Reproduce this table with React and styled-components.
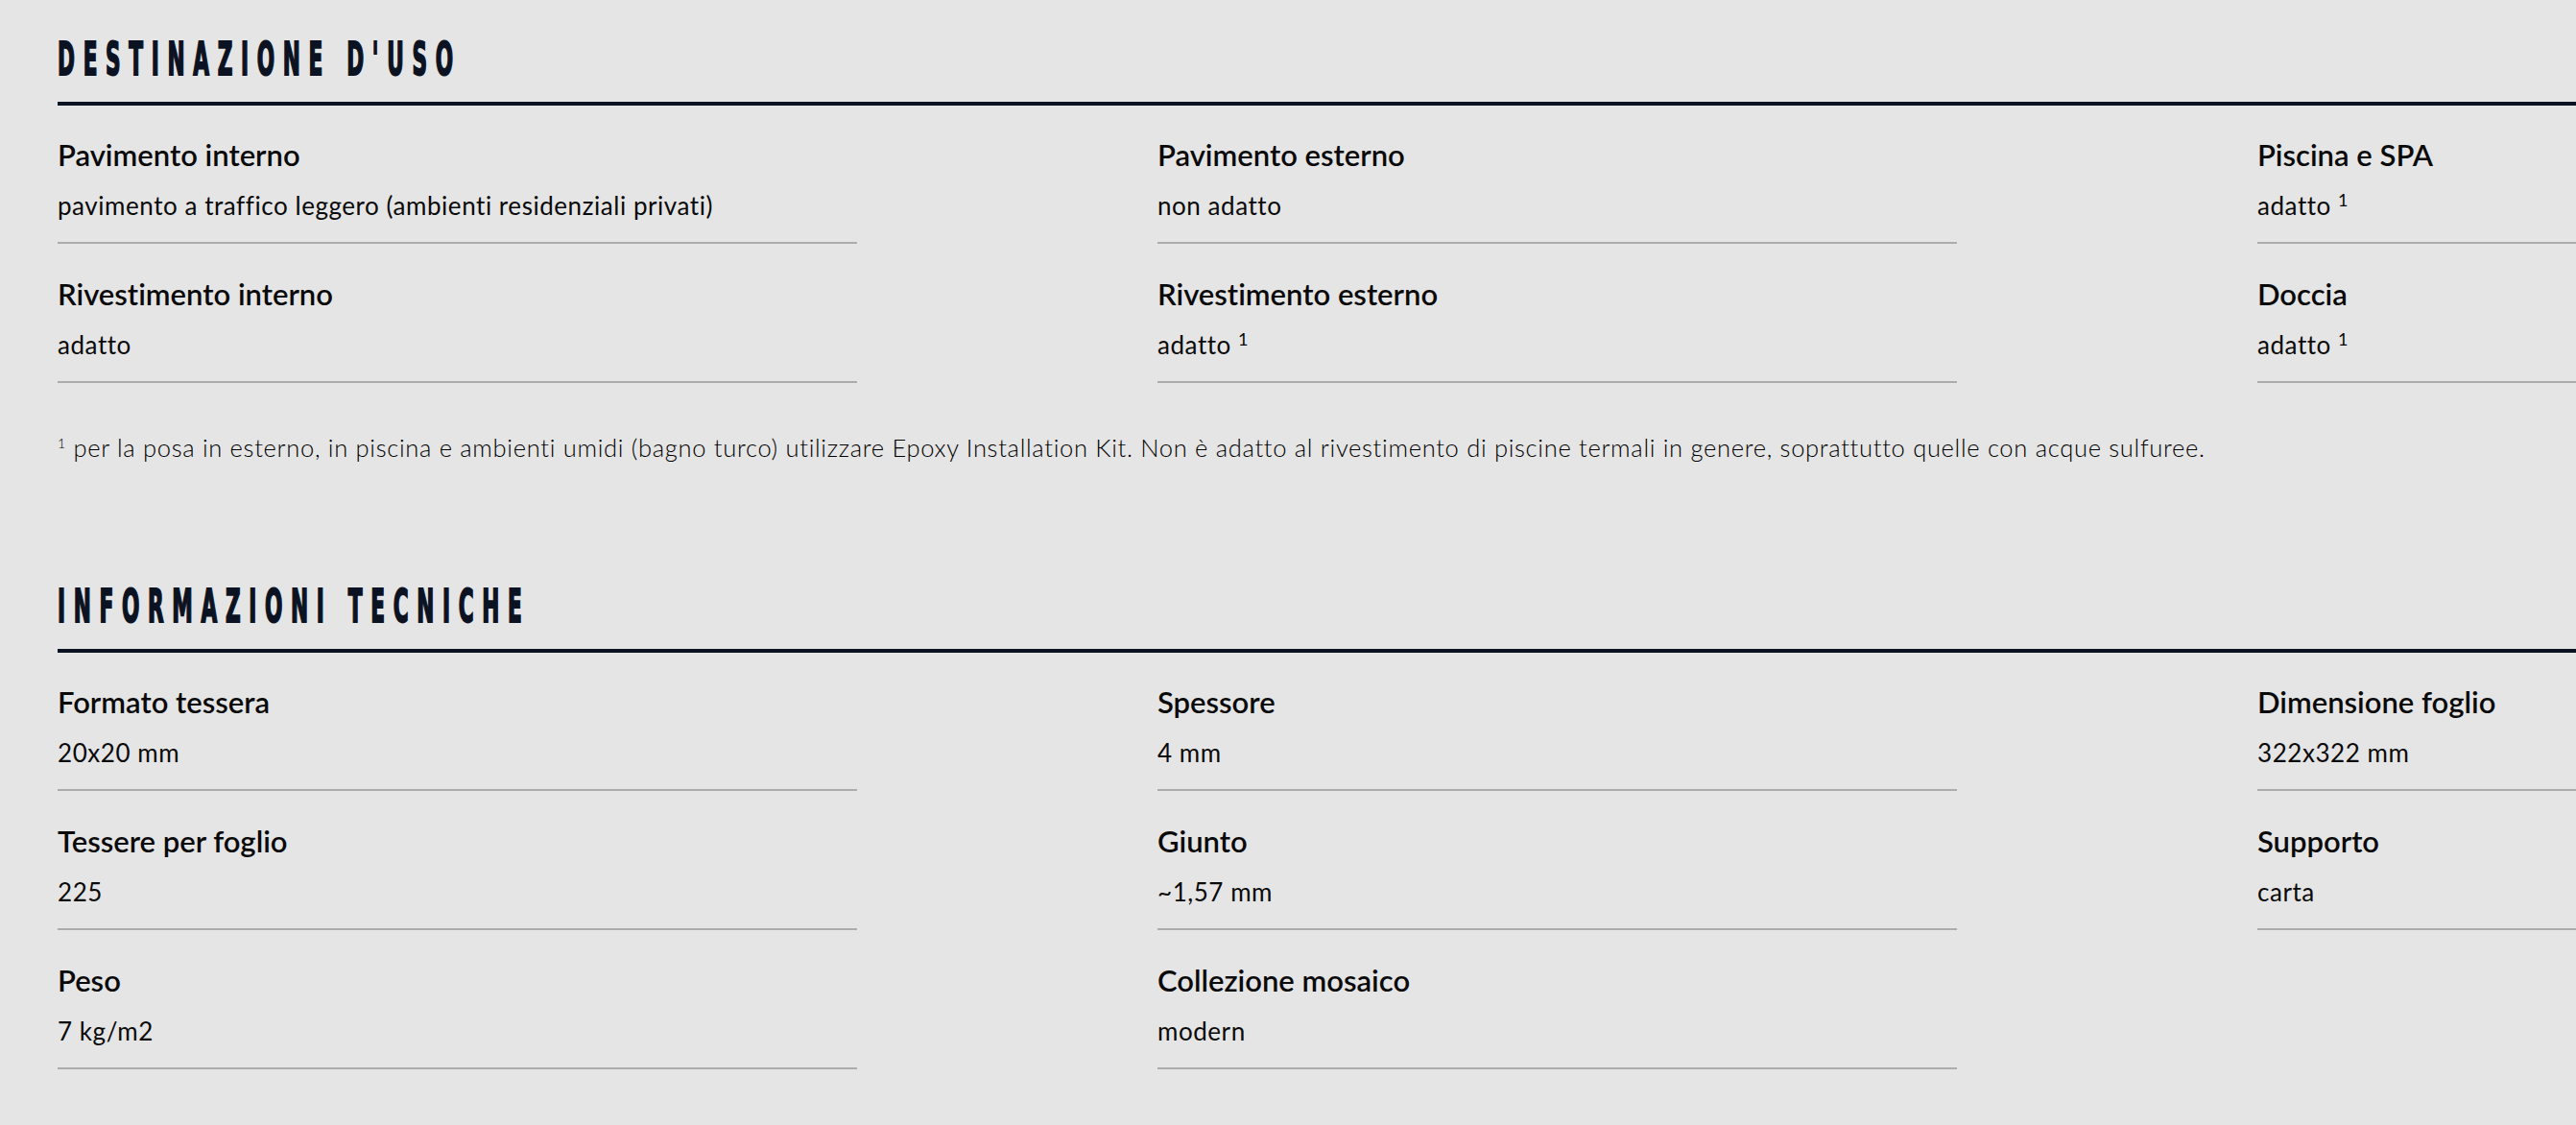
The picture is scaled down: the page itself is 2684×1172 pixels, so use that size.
import React from "react";
import styled, { createGlobalStyle } from "styled-components";

const GlobalStyle = createGlobalStyle`
  html, body {
    margin: 0;
    padding: 0;
    background: #e5e5e5;
    overflow: hidden;
  }
`

const Page = styled.main`
  width: max-content;
  padding: 37px 60px 0;
  display: flex;
  flex-direction: column;
  gap: 126px;
  font-family: Lato, "Noto Sans", sans-serif;
  font-variant-ligatures: no-common-ligatures;
  color: #0a0a0a;
`

const Section = styled.section`
  display: flex;
  flex-direction: column;
`

const Title = styled.h2`
  margin: 0 0 21px;
  height: 48px;
  font-family: "Liberation Sans Narrow", "DejaVu Sans Condensed", "Liberation Sans", sans-serif;
  font-weight: 700;
  font-size: 48px;
  line-height: 48px;
  letter-spacing: 17.4px;
  color: #0b1222;
  white-space: nowrap;
  transform: scaleX(0.5);
  transform-origin: left center;
  -webkit-text-stroke: 2px #0b1222;
`

const Rule = styled.div`
  height: 4px;
  background: #0b1222;
`

const Grid = styled.div`
  margin-top: 33px;
  display: grid;
  grid-template-columns: repeat(3, 833px);
  column-gap: 313px;
  row-gap: 34px;
`

const Item = styled.div`
  display: flex;
  flex-direction: column;
  gap: 20px;
  padding-bottom: 23px;
  border-bottom: 2px solid #acacac;
`

const Label = styled.div`
  font-size: 31px;
  line-height: 36px;
  font-weight: 600;
`

const Value = styled.div`
  font-size: 26px;
  line-height: 30px;
  font-weight: 400;
  letter-spacing: 0.55px;

  sup {
    font-size: 18px;
    line-height: 0;
    vertical-align: 9px;
  }
`

const Note = styled.p`
  margin: 52px 0 0;
  font-size: 25.5px;
  line-height: 30px;
  font-weight: 300;
  letter-spacing: 0.7px;
  color: #000;
  white-space: nowrap;

  sup {
    font-size: 14px;
    line-height: 0;
    vertical-align: 9px;
  }
`

const uses = [
  { label: "Pavimento interno", value: "pavimento a traffico leggero (ambienti residenziali privati)" },
  { label: "Pavimento esterno", value: "non adatto" },
  { label: "Piscina e SPA", value: "adatto", note: true },
  { label: "Rivestimento interno", value: "adatto" },
  { label: "Rivestimento esterno", value: "adatto", note: true },
  { label: "Doccia", value: "adatto", note: true },
]

const specs = [
  { label: "Formato tessera", value: "20x20 mm" },
  { label: "Spessore", value: "4 mm" },
  { label: "Dimensione foglio", value: "322x322 mm" },
  { label: "Tessere per foglio", value: "225" },
  { label: "Giunto", value: "~1,57 mm" },
  { label: "Supporto", value: "carta" },
  { label: "Peso", value: "7 kg/m2" },
  { label: "Collezione mosaico", value: "modern" },
]

const Specs = ({ items }) => (
  <Grid>
    {items.map((item) => (
      <Item key={item.label}>
        <Label>{item.label}</Label>
        <Value>
          {item.value}
          {item.note && <> <sup>1</sup></>}
        </Value>
      </Item>
    ))}
  </Grid>
)

const App = () => (
  <>
    <GlobalStyle />
    <Page>
      <Section>
        <Title>DESTINAZIONE D'USO</Title>
        <Rule />
        <Specs items={uses} />
        <Note>
          <sup>1</sup> per la posa in esterno, in piscina e ambienti umidi (bagno turco) utilizzare Epoxy Installation Kit. Non è adatto al rivestimento di piscine termali in genere, soprattutto quelle con acque sulfuree.
        </Note>
      </Section>
      <Section>
        <Title>INFORMAZIONI TECNICHE</Title>
        <Rule />
        <Specs items={specs} />
      </Section>
    </Page>
  </>
)

export default App;
